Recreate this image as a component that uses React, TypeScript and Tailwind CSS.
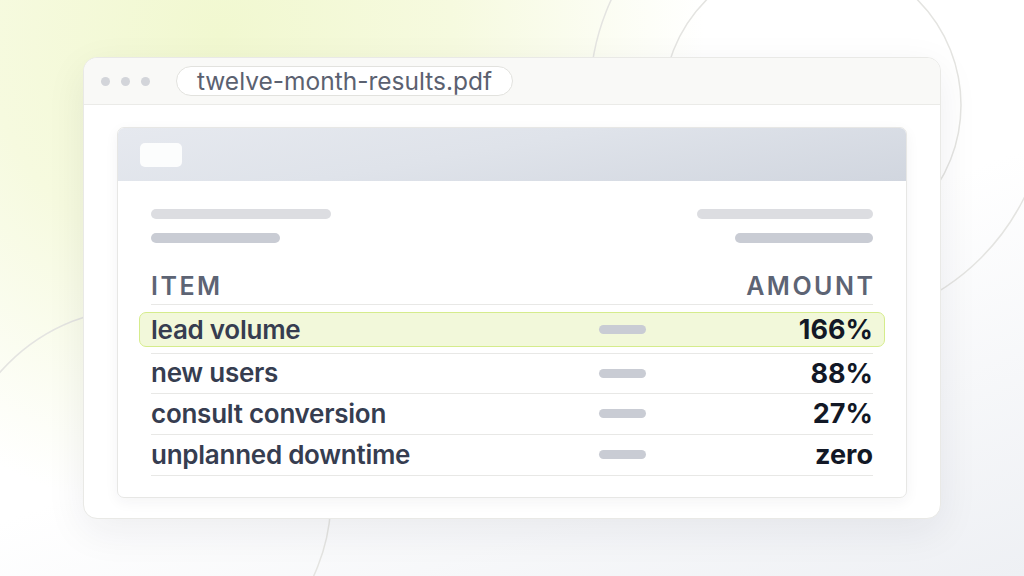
import React from "react";

const rows = [
  { label: "lead volume", value: "166%", h: "h-[42px]" },
  { label: "new users", value: "88%", h: "h-[40px]" },
  { label: "consult conversion", value: "27%", h: "h-[41px]" },
  { label: "unplanned downtime", value: "zero", h: "h-[41px]" },
];

const Backdrop = () => (
  <svg
    className="absolute inset-0 pointer-events-none"
    width={1024}
    height={576}
    viewBox="0 0 1024 576"
    fill="none"
  >
    <circle cx={819} cy={96} r={229} stroke="#e4e4e1" strokeWidth={1.5} />
    <circle cx={812} cy={105} r={149} stroke="#e4e4e1" strokeWidth={1.5} />
    <circle cx={142} cy={497} r={189} stroke="#e4e4e1" strokeWidth={1.5} />
  </svg>
);

const App = () => {
  return (
    <div
      className="relative w-[1024px] h-[576px] overflow-hidden bg-[radial-gradient(circle_at_220px_35px,#f1f8d0_0%,#f6fadf_24%,rgba(255,255,255,0)_50%),linear-gradient(160deg,#ffffff_55%,#eef0f4_100%)]"
      style={{ fontFamily: "Inter, 'Noto Sans', sans-serif" }}
    >
      <Backdrop />
      <div className="relative pt-[57px] pl-[83px]">
        <div className="w-[858px] h-[462px] rounded-[14px] border border-[#e9e9e6] bg-white shadow-[0_12px_40px_rgba(30,35,50,0.07)] overflow-hidden">
          {/* title bar */}
          <div className="h-[47px] flex items-center bg-[#f9f9f7] border-b border-[#ebebe8] pl-[17px]">
            <div className="flex gap-[11px]">
              <span className="w-[9px] h-[9px] rounded-full bg-[#d3d5da]" />
              <span className="w-[9px] h-[9px] rounded-full bg-[#d3d5da]" />
              <span className="w-[9px] h-[9px] rounded-full bg-[#d3d5da]" />
            </div>
            <div className="ml-[26px] h-[30px] w-[337px] flex items-center justify-center rounded-full border border-[#e2e2de] bg-white text-[24.5px] text-[#5b6170] leading-none">
              twelve-month-results.pdf
            </div>
          </div>

          {/* document card */}
          <div className="mt-[22px] ml-[33px] w-[790px] h-[371px] rounded-[7px] border border-[#e7e7e5] bg-white shadow-[0_4px_14px_rgba(30,35,50,0.05)] overflow-hidden">
            <div className="h-[53px] flex items-center pl-[22px] bg-[linear-gradient(170deg,#e6e9ef_0%,#dfe3ea_45%,#d1d6df_100%)]">
              <div className="w-[42px] h-[24px] rounded-[5px] bg-white/90" />
            </div>

            <div className="px-[33px]">
              <div className="mt-[28px] flex justify-between">
                <div className="flex flex-col gap-[14px]">
                  <div className="w-[180px] h-[10px] rounded-full bg-[#dcdde1]" />
                  <div className="w-[129px] h-[10px] rounded-full bg-[#c9ccd4]" />
                </div>
                <div className="flex flex-col items-end gap-[14px]">
                  <div className="w-[176px] h-[10px] rounded-full bg-[#dcdde1]" />
                  <div className="w-[138px] h-[10px] rounded-full bg-[#c9ccd4]" />
                </div>
              </div>

              <div className="mt-[30px] pb-[5px] flex justify-between border-b border-[#e8e8e6] text-[25px] leading-[26px] font-semibold tracking-[0.1em] text-[#5d6474]">
                <span>ITEM</span>
                <span className="mr-[-0.1em]">AMOUNT</span>
              </div>

              <div className="pt-[4px]">
                {rows.map((row, i) => (
                  <div
                    key={row.label}
                    className={`${row.h} border-b border-[#e8e8e6]`}
                  >
                    <div
                      className={
                        i === 0
                          ? "-mx-3 px-[11px] mt-[3px] h-[35px] rounded-[7px] border border-[#d5ec8c] bg-[#f2f8da] grid grid-cols-[448px_47px_1fr] items-center"
                          : "h-full pb-[1px] grid grid-cols-[448px_47px_1fr] items-center"
                      }
                    >
                      <span className="text-[26px] font-semibold text-[#363d50] leading-none tracking-[-0.01em]">
                        {row.label}
                      </span>
                      <span className="h-[9px] rounded-full bg-[#c9ccd4]" />
                      <span className="text-right text-[27px] font-bold text-[#121826] leading-none">
                        {row.value}
                      </span>
                    </div>
                  </div>
                ))}
              </div>
            </div>
          </div>
        </div>
      </div>
    </div>
  );
};

export default App;
